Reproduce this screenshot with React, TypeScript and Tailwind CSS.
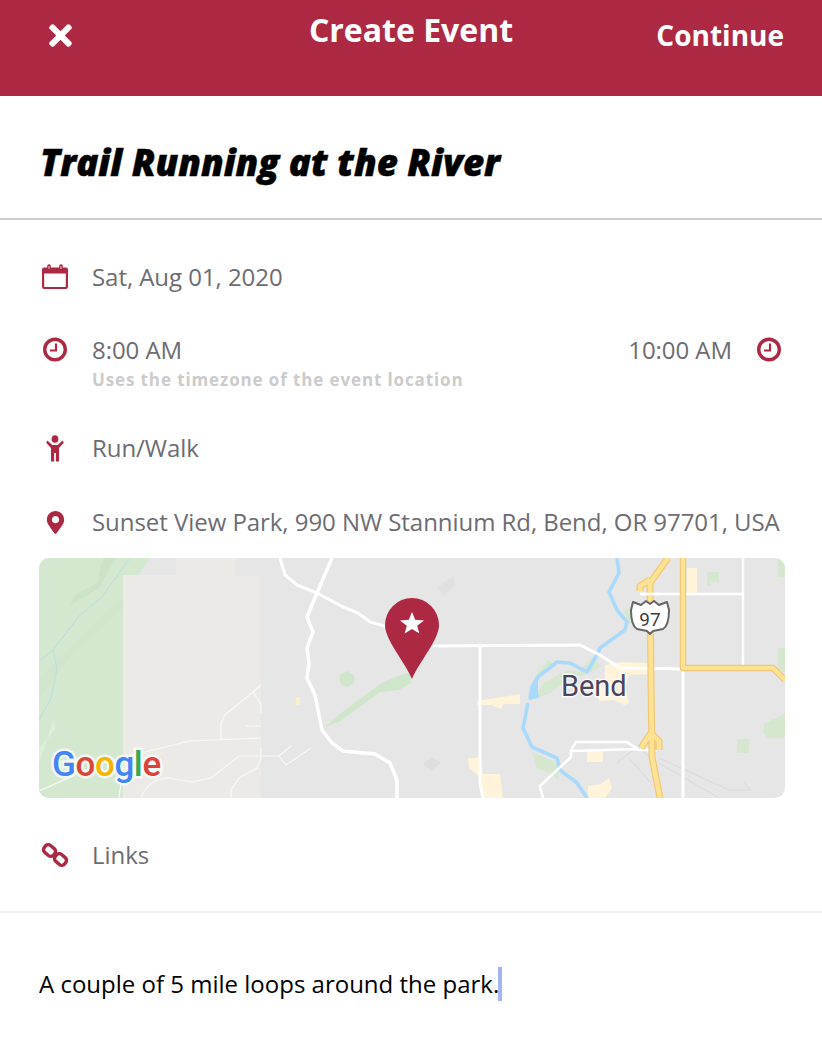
import { FaMapMarkerAlt, FaTimes } from "react-icons/fa";

const red = "#ad2943";

function Calendar() {
  return (
    <svg width="28" height="26" viewBox="0 0 28 26" fill="none" stroke={red} strokeWidth="2.2">
      <rect x="2.1" y="4.5" width="23.8" height="19.5" rx="1" />
      <path d="M2 7H26" strokeWidth="5" />
      <path d="M8 2V5M20 2V5" strokeLinecap="round" strokeWidth="3.6" />
      <path d="M8 2.5V4.5M20 2.5V4.5" stroke="#ffffff" strokeLinecap="round" strokeWidth="0.8" />
    </svg>
  );
}

function Clock() {
  return (
    <svg width="26" height="26" viewBox="0 0 26 26" fill="none" stroke={red}>
      <circle cx="13" cy="12.5" r="10.3" strokeWidth="3.4" />
      <path d="M14 6.5V13.5H8" strokeWidth="2.2" />
    </svg>
  );
}

function Child() {
  return (
    <svg width="18" height="27" viewBox="0 0 20 27" fill={red} preserveAspectRatio="none">
      <circle cx="10" cy="4" r="3.8" />
      <path d="M1.5 5.5L7 10H13L18.5 5.5L19.8 7.8L14.5 13V26.5H11V18H9V26.5H5.5V13L0.2 7.8Z" />
    </svg>
  );
}

function Chain() {
  return (
    <svg width="28" height="28" viewBox="0 0 28 28" fill="none" stroke={red} strokeWidth="3.4" strokeLinejoin="round">
      <rect x="2.5" y="5" width="12" height="9" rx="3.6" transform="rotate(40 8.5 9.5)" />
      <rect x="13.5" y="14" width="12" height="9" rx="3.6" transform="rotate(40 19.5 18.5)" />
    </svg>
  );
}

function MapArt() {
  return (
    <svg className="block h-full w-full" viewBox="0 0 746 240" preserveAspectRatio="none">
      <rect width="746" height="240" fill="#e6e6e6" />
      <path d="M0 0H111L84 39V240H0Z" fill="#d4e8d0" />
      <path d="M64 0H77L60 30L31 47L36 37L58 25Z" fill="#cde3c9" />
      <path d="M0 120L60 60L84 39V50L30 100L0 140Z" fill="#d1e6cd" />
      <path d="M0 205L15 160L16 172L0 190Z" fill="#ddeeda" />
      <path d="M84 17H137V0H196V18H222V240H84Z" fill="#ebeae6" />
      <path d="M0 103L14 92L41 57L62 40L91 0M14 92L18 110L12 140L0 162" fill="none" stroke="#b9dde0" strokeWidth="1" />
      <path d="M0 233L52 210M80 240L84 210M102 195L150 183L222 180M222 127L214 134L186 157L182 165V181M214 134L222 146V155M207 168H222M222 190V200L218 210L200 220L192 232V240M102 240C108 225 118 220 130 220L153 224L172 220L200 198L218 198L240 198L247 207L272 190M240 198L252 188" fill="none" stroke="#f8f8f5" strokeWidth="1.2" />
      <path d="M302 116L308 113L314 116L316 121L314 126L308 129L302 126L300 121Z" fill="#cfe6ca" />
      <path d="M286 169L298 158L341 126L361 117L372 115V125L360 132L341 134L300 164Z" fill="#cfe6ca" />
      <rect x="257" y="139" width="4" height="8" fill="#fbeecb" />
      <path d="M398 30L414 18L416 27L405 38Z" fill="#e0e0e0" />
      <path d="M384 206L393 199L402 205L392 213Z" fill="#dedede" />
      <path d="M241 0L246 17L258 27L278 35L304 49L319 55L331 64L352 70" fill="none" stroke="#ffffff" strokeWidth="3" />
      <path d="M293 0L278 35L268 59L274 74L268 90L270 105L268 120L276 137L283 172L293 185L304 193L336 196L351 205L358 222V240" fill="none" stroke="#ffffff" strokeWidth="3.5" />

      <path d="M493 122L509 102L517 107L500 118Z" fill="#d5e8cf" />
      <path d="M492 142L512 135L530 120L548 116L563 108L552 100L540 114L528 112L505 125Z" fill="#d5e8cf" />
      <path d="M494 194L518 205L520 222L510 215L497 210Z" fill="#d5e8cf" />
      <path d="M585 52L594 50V66L588 62Z" fill="#d5e8cf" />
      <path d="M438 143L481 136V146H465L462 151L452 147H438Z" fill="#fff4d9" />
      <path d="M566 107L581 104L610 105V116L590 117L586 130L590 145L585 147L575 142L560 143L556 132L566 125Z" fill="#fff4d9" />
      <rect x="548" y="192" width="16" height="12" fill="#fff4d9" />
      <path d="M549 240L549 228L562 226L570 220L573 230L566 240Z" fill="#fff4d9" />
      <path d="M429 200H441L444 216H461L464 240H444L442 220L430 210Z" fill="#fff4d9" />
      <path d="M648 10H658V37H648Z" fill="#fff4d9" />
      <path d="M668 14H680V24H672V28H668Z" fill="#d5e8cf" />
      <path d="M739 0H746V19H739Z" fill="#d5e8cf" />
      <path d="M739 90H746V114H739Z" fill="#d5e8cf" />
      <path d="M725 166L746 155V180L728 180L724 174Z" fill="#d5e8cf" />
      <rect x="698" y="181" width="12" height="14" fill="#d5e8cf" />

      <path d="M578 0L580 15L570 34L578 52L588 64L586 72L561 90L559 95L548 114L531 105L518 104L499 119L493 129L491 140L500 138" fill="none" stroke="#aadafb" strokeWidth="3.6" strokeLinejoin="round" />
      <path d="M499 119L492 129L491 142L499 138Z" fill="#aadafb" />
      <path d="M489 145L484 170L493 189L518 200L521 212L538 225L548 240" fill="none" stroke="#aadafb" strokeWidth="3.6" strokeLinejoin="round" />

      <path d="M578 205L590 195L600 190M600 190L618 205M612 225L590 200M620 205L680 240M620 200L690 232H712L705 225" fill="none" stroke="#d9d9d9" strokeWidth="1" />

      <path d="M394 88L541 87L561 97L581 110L644 111V240" fill="none" stroke="#ffffff" strokeWidth="3" />
      <path d="M441 89V225L444 240" fill="none" stroke="#ffffff" strokeWidth="3" />
      <path d="M601 36H703M704 0V109" fill="none" stroke="#ffffff" strokeWidth="2.5" />
      <path d="M504 240L501 228L532 199V192L537 184H588L600 192L618 192M532 193L600 191" fill="none" stroke="#ffffff" strokeWidth="2.5" />

      <g fill="none" strokeLinejoin="round">
        <path d="M629 0L611 25L612 125L613 199L621 240M601 33V28L611 22M602 190L612 175L620 183L620 192" stroke="#f1c976" strokeWidth="7" />
        <path d="M644 0V110H734L746 122" stroke="#f1c976" strokeWidth="6.5" />
        <path d="M629 0L611 25L612 125L613 199L621 240M601 33V28L611 22M602 190L612 175L620 183L620 192" stroke="#fde293" strokeWidth="4.5" />
        <path d="M644 0V110H734L746 122" stroke="#fde293" strokeWidth="4" />
      </g>
      <path d="M601 36H620" fill="none" stroke="#ffffff" strokeWidth="2.5" />

      <path d="M594 44L602 47L607 43L611 46L615 43L620 47L628 44L630 52C630 58 629 68 624 71L614 73L611 76L608 73L598 71C593 68 592 58 592 52Z" fill="#ffffff" stroke="#666666" strokeWidth="2" strokeLinejoin="round" />
      <text x="611" y="68" textAnchor="middle" fontFamily="Roboto, sans-serif" fontSize="19" fill="#3f3f3f">97</text>
      <text x="522" y="138" fontFamily="Roboto, sans-serif" fontSize="29" fill="#4b4560" stroke="#ffffff" strokeWidth="3" paintOrder="stroke" strokeOpacity="0.8">Bend</text>
      <text x="13" y="218" fontFamily="Roboto, sans-serif" fontWeight="500" fontSize="35" stroke="#ffffff" strokeWidth="5" strokeOpacity="0.7" paintOrder="stroke" letterSpacing="-0.4">
        <tspan fill="#4285f4">G</tspan>
        <tspan fill="#db4437">o</tspan>
        <tspan fill="#f4b400">o</tspan>
        <tspan fill="#4285f4">g</tspan>
        <tspan fill="#34a853">l</tspan>
        <tspan fill="#db4437">e</tspan>
      </text>
    </svg>
  );
}

function Pin() {
  return (
    <svg className="absolute left-[346px] top-[40px]" width="54" height="82" viewBox="0 0 54 82">
      <path d="M27 81C20 64 0 42 0 27A27 27 0 0 1 54 27C54 42 34 64 27 81Z" fill={red} />
      <path d="M27 14L30.2 21.8L39 22.4L32.2 27.8L34.4 35.5L27 31L19.6 35.5L21.8 27.8L15 22.4L23.8 21.8Z" fill="#ffffff" />
    </svg>
  );
}

function Row({ icon, children }: { icon: React.ReactNode; children: React.ReactNode }) {
  return (
    <div className="flex items-center">
      <div className="flex w-[53px] shrink-0 justify-center pr-[21px]">{icon}</div>
      {children}
    </div>
  );
}

export default function App() {
  return (
    <div className="h-[1048px] w-[822px] overflow-hidden bg-white font-['Open_Sans',sans-serif] text-[24px] leading-[32px] tracking-[-0.05px] text-[#6c6c72]">
      <header className="grid h-[96px] grid-cols-[1fr_auto_1fr] items-start bg-[#ad2943] px-[38px] pt-[8px] tracking-normal text-white">
        <FaTimes className="mt-[11px] ml-[6px] text-[33px]" />
        <h1 className="text-[32px] leading-[44px] font-bold">Create Event</h1>
        <span className="mt-[8px] justify-self-end text-[28px] leading-[38px] font-bold">Continue</span>
      </header>
      <div className="flex h-[124px] items-center border-b-2 border-[#cccccc] px-[40px] pt-[10px]">
        <h2 className="text-[36.6px] leading-[44px] font-extrabold tracking-normal text-black italic [-webkit-text-stroke:0.5px_black]">Trail Running at the River</h2>
      </div>
      <div className="px-[39px] pt-[41px]">
        <Row icon={<Calendar />}>Sat, Aug 01, 2020</Row>
        <div className="mt-[41px] flex items-center justify-between pr-[1px]">
          <Row icon={<Clock />}>8:00 AM</Row>
          <div className="flex items-center gap-[24px]">
            10:00 AM
            <Clock />
          </div>
        </div>
        <p className="mt-[2px] pl-[53px] text-[17px] leading-[23px] font-bold tracking-[0.88px] text-[#cbcbcb]">Uses the timezone of the event location</p>
        <div className="mt-[41px]">
          <Row icon={<Child />}>Run/Walk</Row>
        </div>
        <div className="mt-[42px] whitespace-nowrap">
          <Row icon={<FaMapMarkerAlt className="text-[23px] text-[#ad2943]" />}>Sunset View Park, 990 NW Stannium Rd, Bend, OR 97701, USA</Row>
        </div>
        <div className="relative mt-[20px] h-[240px] w-[746px] overflow-hidden rounded-[10px]">
          <MapArt />
          <Pin />
        </div>
        <div className="mt-[41px]">
          <Row icon={<Chain />}>Links</Row>
        </div>
      </div>
      <div className="mt-[40px] border-t-2 border-[#f0f0f0] px-[39px] pt-[54px] tracking-normal text-black">
        <p className="flex items-center whitespace-nowrap">
          A couple of 5 mile loops around the park.
          <span className="-ml-[1px] inline-block h-[34px] w-[4px] bg-[#a4b5f4]" />
        </p>
      </div>
    </div>
  );
}
